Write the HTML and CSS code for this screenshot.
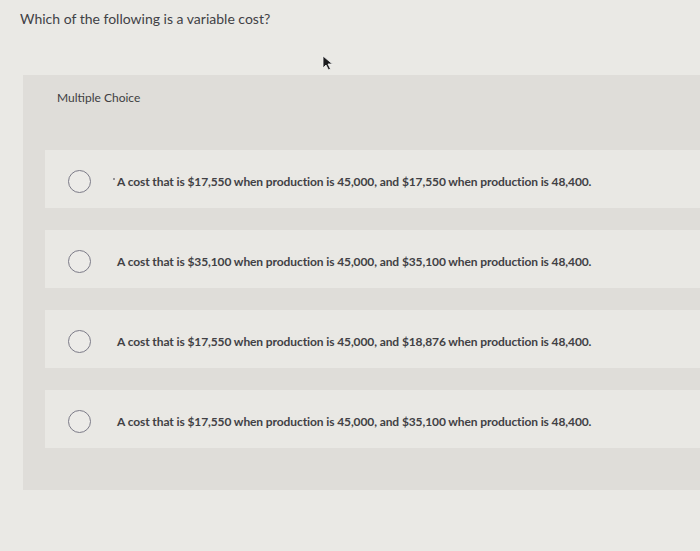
FILE: index.html
```html
<!DOCTYPE html>
<html lang="en">
<head>
<meta charset="utf-8">
<title>Multiple Choice</title>
<link rel="stylesheet" href="styles.css">
</head>
<body>
<div class="page">
  <p class="question">Which of the following is a variable cost?</p>
  <section class="panel">
    <div class="label">Multiple Choice</div>
    <ul class="options">
      <li class="option">
        <span class="radio"></span>
        <span class="text"><span class="speck"></span>A cost that is $17,550 when production is 45,000, and $17,550 when production is 48,400.</span>
      </li>
      <li class="option">
        <span class="radio"></span>
        <span class="text">A cost that is $35,100 when production is 45,000, and $35,100 when production is 48,400.</span>
      </li>
      <li class="option">
        <span class="radio"></span>
        <span class="text">A cost that is $17,550 when production is 45,000, and $18,876 when production is 48,400.</span>
      </li>
      <li class="option">
        <span class="radio"></span>
        <span class="text">A cost that is $17,550 when production is 45,000, and $35,100 when production is 48,400.</span>
      </li>
    </ul>
  </section>
  <svg class="cursor" width="12" height="16" viewBox="0 0 12 16" aria-hidden="true">
    <path d="M1 1 L1 13 L4 10 L6.5 15 L8.5 14 L6 9 L10.5 9 Z" fill="#1c1c1e" stroke="#f4f4f2" stroke-width="0.8"/>
  </svg>
</div>
</body>
</html>
```

FILE: styles.css
```css
html, body {
  margin: 0;
  padding: 0;
}
body {
  background: #eae9e5;
  font-family: "Lato", "Liberation Sans", sans-serif;
  color: #3c3c40;
}
.page {
  position: relative;
  width: 700px;
  height: 551px;
  overflow: hidden;
  padding-top: 10px;
  box-sizing: border-box;
}
.question {
  margin: 0 0 0 20px;
  font-size: 14px;
  line-height: 17px;
  color: #414145;
}
.panel {
  margin: 48px 0 0 23px;
  background: #dfddd9;
  padding: 16px 0 42px 0;
}
.label {
  margin-left: 34px;
  font-size: 12px;
  line-height: 14px;
  color: #3e3e42;
}
.options {
  list-style: none;
  margin: 45px 0 0 22px;
  padding: 0;
  display: flex;
  flex-direction: column;
  gap: 22px;
}
.option {
  height: 58px;
  background: #e9e8e4;
  display: flex;
  align-items: center;
  padding: 4px 0 0 23px;
  box-sizing: border-box;
  gap: 26px;
}
.radio {
  width: 21px;
  height: 21px;
  border: 1.6px solid #7c7b88;
  border-radius: 50%;
  flex: none;
  background: #ecebe8;
}
.text {
  position: relative;
  font-size: 12px;
  font-weight: 700;
  color: #414145;
  letter-spacing: -0.1px;
}
.speck {
  position: absolute;
  left: -4px;
  top: 4px;
  width: 2px;
  height: 2px;
  border-radius: 50%;
  background: #77767c;
}
.cursor {
  position: absolute;
  left: 322px;
  top: 55px;
}
```
